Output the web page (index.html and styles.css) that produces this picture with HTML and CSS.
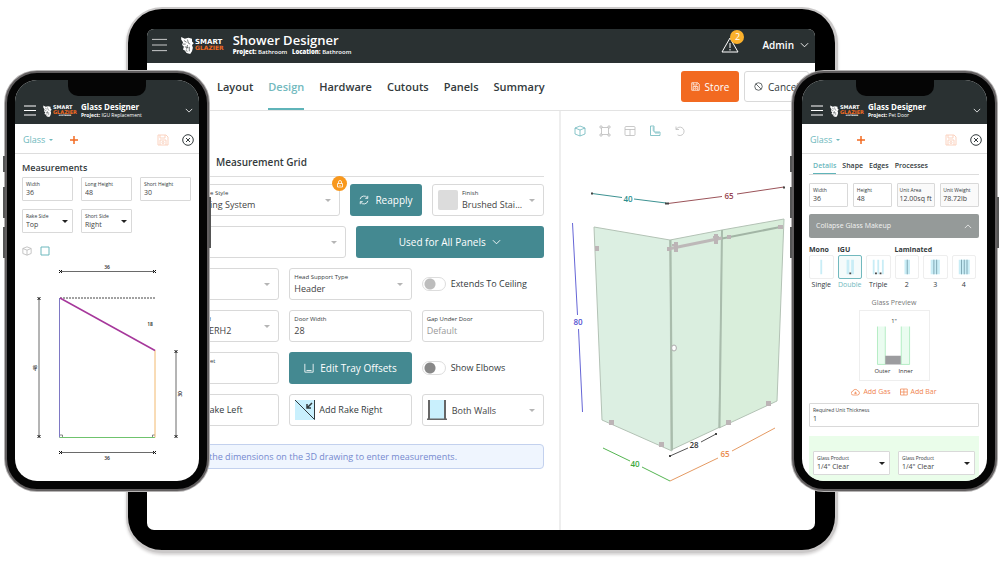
FILE: index.html
```html
<!DOCTYPE html>
<html lang="en">
<head>
<meta charset="utf-8">
<meta name="viewport" content="width=device-width, initial-scale=1">
<title>Smart Glazier</title>
<link rel="stylesheet" href="styles.css">
</head>
<body>
<svg class="sprite" aria-hidden="true">
  <symbol id="menu" viewBox="0 0 16 14"><path d="M0 1h16M0 7h16M0 13h16"/></symbol>
  <symbol id="chevron" viewBox="0 0 10 6"><path d="M1 1l4 4 4-4"/></symbol>
  <symbol id="tiger" viewBox="0 0 14 20">
    <path class="solid" d="M0 1l4 2 4-1 4 1 0 3 2 2-2 2 1 3-1 4-2 3-4-1-2-3-2-1 1-3-2-2 1-3-2-3z"/>
    <path class="stripe" d="M3 5l3 2M7 4l1 4 2 1M2 9l3 0M4 12l4 1M7 10l-1 5M9 12l0 5M5 16l2 1"/>
  </symbol>
  <symbol id="save" viewBox="0 0 12 12"><path d="M1 1h8l2 2v8H1zM3 1v3h5V1M3 11V6h6v5"/><circle cx="6" cy="8.5" r="1"/></symbol>
  <symbol id="close" viewBox="0 0 12 12"><circle cx="6" cy="6" r="5.3"/><path d="M4 4l4 4M8 4l-4 4"/></symbol>
  <symbol id="plus" viewBox="0 0 10 10"><path d="M5 1v8M1 5h8"/></symbol>
  <symbol id="cube" viewBox="0 0 12 12"><path d="M6 1l5 2v6l-5 2-5-2V3zM1 3l5 2 5-2M6 5v6"/></symbol>
  <symbol id="frame" viewBox="0 0 12 12"><path d="M3 2.500h6M3 9.500h6M2.500 3v6M9.500 3v6M1 1h2v2H1zM9 1h2v2H9zM1 9h2v2H1zM9 9h2v2H9z"/></symbol>
  <symbol id="grid" viewBox="0 0 12 12"><rect x="1" y="1.500" width="10" height="9" rx="1"/><path d="M1 4.500h10M6 4.500v6"/></symbol>
  <symbol id="ruler" viewBox="0 0 12 12"><path d="M1.500 1h3.500v6h6v3.500H1.500zM3.500 3H5M3.500 5H5M7 9V7M9 9V7"/></symbol>
  <symbol id="undo" viewBox="0 0 12 12"><path d="M2 1.500v3h3M2.200 4.300A4.200 4.200 0 1 1 3.500 9.800"/></symbol>
  <symbol id="ban" viewBox="0 0 12 12"><circle cx="6" cy="6" r="5"/><path d="M2.500 2.500l7 7"/></symbol>
  <symbol id="refresh" viewBox="0 0 12 12"><path d="M1.300 5A4.800 4.800 0 0 1 10 3.400M10.500 1v3h-3M10.700 7A4.800 4.800 0 0 1 2 8.600M1.500 11V8h3"/></symbol>
</svg>

<div class="stage">
  <main class="tablet">
    <div class="screen">
      <header class="bar">
        <button class="icon-btn" aria-label="Menu"><svg class="i-menu"><use href="#menu"/></svg></button>
        <div class="logo"><svg><use href="#tiger"/></svg><div><b>SMART</b><i>GLAZIER</i></div></div>
        <div class="heading"><h1>Shower Designer</h1><p><b>Project:</b> Bathroom &nbsp; <b>Location:</b> Bathroom</p></div>
        <button class="icon-btn alerts" aria-label="Alerts">
          <svg viewBox="0 0 18 16"><path d="M9 1l8 14H1zM9 6v5M9 12v1.500"/></svg><span class="count">2</span>
        </button>
        <button class="icon-btn user">Admin <svg class="i-chev"><use href="#chevron"/></svg></button>
      </header>
      <div class="tabs-row">
        <nav class="tabs">
          <a href="#layout">Layout</a><a href="#design" class="on">Design</a><a href="#hardware">Hardware</a><a href="#cutouts">Cutouts</a><a href="#panels">Panels</a><a href="#summary">Summary</a>
        </nav>
        <div class="actions">
          <button class="btn store"><svg><use href="#save"/></svg>Store</button>
          <button class="btn cancel"><svg><use href="#ban"/></svg>Cancel</button>
        </div>
      </div>
      <div class="work">
        <section class="form">
          <h2>Measurement Grid</h2>
          <div class="row r-style">
            <label class="field pick tucked"><span>e Style</span><select><option>ing System</option></select><em class="lock"><svg viewBox="0 0 8 8"><path d="M1.500 3.500h5v3.500h-5zM2.500 3.500V2a1.500 1.500 0 0 1 3 0v1.500M4 5v1"/></svg></em></label>
            <button class="btn teal"><svg><use href="#refresh"/></svg>Reapply</button>
            <label class="field pick swatched"><i class="swatch"></i><span>Finish</span><select><option>Brushed Stai...</option></select></label>
          </div>
          <div class="row r-half">
            <label class="field pick plain"><select aria-label="Panel"><option></option></select></label>
            <button class="btn teal">Used for All Panels <svg class="i-chev"><use href="#chevron"/></svg></button>
          </div>
          <div class="row">
            <label class="field pick plain"><select aria-label="Mount"><option></option></select></label>
            <label class="field pick"><span>Head Support Type</span><select><option>Header</option></select></label>
            <label class="toggle"><input type="checkbox" disabled>Extends To Ceiling</label>
          </div>
          <div class="row">
            <label class="field pick tucked deep"><span>ed</span><select><option>SERH2</option></select></label>
            <label class="field"><span>Door Width</span><input value="28"></label>
            <label class="field"><span>Gap Under Door</span><input placeholder="Default"></label>
          </div>
          <div class="row">
            <label class="field tucked"><span>et</span><input></label>
            <button class="btn teal"><svg viewBox="0 0 12 12"><path d="M1 1v10h10V1M3 9h6"/></svg>Edit Tray Offsets</button>
            <label class="toggle"><input type="checkbox">Show Elbows</label>
          </div>
          <div class="row">
            <button class="btn tile left">Rake Left</button>
            <button class="btn tile"><svg class="pic" viewBox="0 0 20 20"><path class="sky" d="M0 0h20v20H0z"/><path d="M0 0l19.500 19.500V0"/><path class="arrow" d="M17 3l-5 5M12 4v4h4"/></svg>Add Rake Right</button>
            <label class="field pick wall"><svg class="pic" viewBox="0 0 20 20"><path class="sky" d="M3 0h14v19H3z"/><path class="thick" d="M2 0v19M18 0v19M0 19.500h20"/></svg><select aria-label="Walls"><option>Both Walls</option></select></label>
          </div>
          <p class="note">the dimensions on the 3D drawing to enter measurements.</p>
        </section>
        <section class="view">
          <div class="tools">
            <button class="icon-btn on" aria-label="3D"><svg><use href="#cube"/></svg></button>
            <button class="icon-btn" aria-label="Frame"><svg><use href="#frame"/></svg></button>
            <button class="icon-btn" aria-label="Layout"><svg><use href="#grid"/></svg></button>
            <button class="icon-btn on" aria-label="Dimensions"><svg><use href="#ruler"/></svg></button>
            <button class="icon-btn" aria-label="Undo"><svg><use href="#undo"/></svg></button>
          </div>
          <svg class="shower" viewBox="560 150 254 350" role="img" aria-label="Shower enclosure">
            <g class="glass">
              <path class="g1" d="M593 227l76 13 2 211-70-31z"/>
              <path class="g2" d="M669 240l52-10-2 197-49 23z"/>
              <path class="g3" d="M721 230l62-11-7 182-58 27z"/>
            </g>
            <path class="post" d="M669.500 240l1.500 210M721 230l-2.500 198"/>
            <path class="rail" d="M667 249l54-11"/>
            <path class="rail2" d="M721 238.500l61-12"/>
            <path class="hw" d="M673 242h4v10h-4zM671 244h6v2h-6zM713 234h4v10h-4zM712 236h6v2h-6zM594 246h4v5h-4zM666 247h4v4h-4zM608 420h5v5h-5zM658 442h5v5h-5zM725 420h5v5h-5zM765 401h5v5h-5zM726 235h4v4h-4zM777 225h5v4h-5z"/>
            <ellipse class="knob" cx="673" cy="348" rx="2.400" ry="3"/>
            <g class="dims">
              <path stroke="#3d9292" d="M591 193.500l30 4M633 199l32 4"/><path stroke="#9b5359" d="M667 203.500l54-7M736 194l47-7"/>
              <path stroke="#6666d6" d="M571.500 223l5 92M577.500 329l4 83"/><path stroke="#55b552" d="M602 448l27 13M641 467l28 14"/>
              <path stroke="#555" d="M669 456l18-8M700 442l15-8"/><path stroke="#e59a63" d="M669 481l48-23M731 451l43-23"/>
            </g>
            <path class="ends" d="M590 192.500h2v2h-2zM664 202.500h4v2h-4zM782 186.500h2v2h-2zM668 455h2v2h-2zM714 433h2v2h-2z"/>
            <g class="nums">
              <text x="627" y="202" fill="#2b8d8d">40</text><text x="728" y="199" fill="#974550">65</text>
              <text x="577" y="325" fill="#5050d0">80</text><text x="634" y="467" fill="#3ba83a">40</text>
              <text x="693" y="448" fill="#333">28</text><text x="724" y="457" fill="#ea8a4c">65</text>
            </g>
          </svg>
        </section>
      </div>
    </div>
  </main>

  <aside class="phone phone-a">
    <div class="screen">
      <header class="bar">
        <button class="icon-btn" aria-label="Menu"><svg class="i-menu"><use href="#menu"/></svg></button>
        <div class="logo"><svg><use href="#tiger"/></svg><div><b>SMART</b><i>GLAZIER</i><small>SOFTWARE</small></div></div>
        <div class="heading"><h1>Glass Designer</h1><p><b>Project:</b> IGU Replacement</p></div>
        <button class="icon-btn" aria-label="Expand"><svg class="i-chev"><use href="#chevron"/></svg></button>
      </header>
      <div class="toolbar">
        <button class="icon-btn glass-menu">Glass</button>
        <button class="icon-btn add" aria-label="Add"><svg><use href="#plus"/></svg></button>
        <button class="icon-btn save" aria-label="Save"><svg><use href="#save"/></svg></button>
        <button class="icon-btn close" aria-label="Close"><svg><use href="#close"/></svg></button>
      </div>
      <div class="body">
        <h2>Measurements</h2>
        <div class="thirds">
          <label class="field"><span>Width</span><input value="36"></label>
          <label class="field"><span>Long Height</span><input value="48"></label>
          <label class="field"><span>Short Height</span><input value="30"></label>
          <label class="field pick"><span>Rake Side</span><select><option>Top</option></select></label>
          <label class="field pick"><span>Short Side</span><select><option>Right</option></select></label>
        </div>
        <div class="modes">
          <button class="icon-btn" aria-label="3D"><svg><use href="#cube"/></svg></button>
          <button class="icon-btn on" aria-label="2D"><svg viewBox="0 0 10 10"><path d="M1 1h8v8H1z"/></svg></button>
        </div>
      </div>
      <svg class="sketch" viewBox="15 260 184 210" role="img" aria-label="Raked panel">
        <g class="measure">
          <path d="M60 271.500h95M60 452.500h95M39 298v139M176 351v86"/>
          <path class="tick" d="M59 270l3 3M59 273l3-3M153 270l3 3M153 273l3-3M59 451l3 3M59 454l3-3M153 451l3 3M153 454l3-3M37.500 297l3 3M37.500 300l3-3M37.500 435l3 3M37.500 438l3-3M174.500 350l3 3M174.500 353l3-3M174.500 435l3 3M174.500 438l3-3"/>
        </g>
        <path class="dash" d="M60 298h95"/>
        <path class="corner" d="M60 435h2.500v2.500M155 435h-2.500v2.500"/>
        <path stroke="#7e78c4" d="M59.500 298v139.500"/><path stroke="#6fc36d" d="M59.500 437.500h95.500"/>
        <path stroke="#f2b96f" d="M155 350v87.500"/><path stroke="#a6379b" stroke-width="1.500" d="M60 298l95 52.500"/>
        <text x="107" y="269">36</text><text x="107" y="460">36</text><text x="150" y="326">18</text>
        <text transform="translate(37 368) rotate(-90)">48</text><text transform="translate(182 394) rotate(-90)">30</text>
      </svg>
    </div>
  </aside>

  <aside class="phone phone-b">
    <div class="screen">
      <header class="bar">
        <button class="icon-btn" aria-label="Menu"><svg class="i-menu"><use href="#menu"/></svg></button>
        <div class="logo"><svg><use href="#tiger"/></svg><div><b>SMART</b><i>GLAZIER</i><small>SOFTWARE</small></div></div>
        <div class="heading"><h1>Glass Designer</h1><p><b>Project:</b> Pet Door</p></div>
        <button class="icon-btn" aria-label="Expand"><svg class="i-chev"><use href="#chevron"/></svg></button>
      </header>
      <div class="toolbar">
        <button class="icon-btn glass-menu">Glass</button>
        <button class="icon-btn add" aria-label="Add"><svg><use href="#plus"/></svg></button>
        <button class="icon-btn save" aria-label="Save"><svg><use href="#save"/></svg></button>
        <button class="icon-btn close" aria-label="Close"><svg><use href="#close"/></svg></button>
      </div>
      <div class="body">
        <nav class="subtabs"><a href="#details" class="on">Details</a><a href="#shape">Shape</a><a href="#edges">Edges</a><a href="#processes">Processes</a></nav>
        <div class="quarters">
          <label class="field"><span>Width</span><input value="36"></label>
          <label class="field"><span>Height</span><input value="48"></label>
          <label class="field locked"><span>Unit Area</span><input value="12.00sq ft" readonly></label>
          <label class="field locked"><span>Unit Weight</span><input value="78.72lb" readonly></label>
        </div>
        <button class="collapse">Collapse Glass Makeup<svg class="i-chev up"><use href="#chevron"/></svg></button>
        <div class="makeup">
          <h3>Mono</h3><h3 class="two">IGU</h3><h3 class="three">Laminated</h3>
          <button class="kind"><svg viewBox="0 0 24 24"><path class="pane" d="M11 4h2v16h-2z"/></svg><span>Single</span></button>
          <button class="kind on"><svg viewBox="0 0 24 24"><path class="pane" d="M8 4h3v16H8zM13 4h3v16h-3z"/><path class="seal" d="M11 18h2v2h-2z"/></svg><span>Double</span></button>
          <button class="kind"><svg viewBox="0 0 24 24"><path class="pane" d="M6 4h2v16H6zM11 4h2v16h-2zM16 4h2v16h-2z"/><path class="seal" d="M8.500 18h2v2h-2zM13.500 18h2v2h-2z"/></svg><span>Triple</span></button>
          <button class="kind"><svg viewBox="0 0 24 24"><path class="pane" d="M9 4h6v16H9z"/><path class="film" d="M12 4v16"/></svg><span>2</span></button>
          <button class="kind"><svg viewBox="0 0 24 24"><path class="pane" d="M7 4h10v16H7z"/><path class="film" d="M10.500 4v16M13.500 4v16"/></svg><span>3</span></button>
          <button class="kind"><svg viewBox="0 0 24 24"><path class="pane" d="M6 4h12v16H6z"/><path class="film" d="M9 4v16M12 4v16M15 4v16"/></svg><span>4</span></button>
        </div>
        <p class="caption">Glass Preview</p>
        <figure class="preview">
          <svg viewBox="0 0 71 71" role="img" aria-label="Double glazed unit">
            <path class="lite" d="M18 16h8v39h-8zM42 16h9v39h-9z"/><path class="edge" d="M18 16v39M26 16v39M42.500 16v39M51 16v39M18 55h8M42 55h9"/>
            <path class="spacer" d="M26 46h16v9H26z"/>
            <text x="35" y="12">1"</text><text x="23" y="64">Outer</text><text x="47" y="64">Inner</text>
          </svg>
        </figure>
        <div class="adds">
          <button class="icon-btn"><svg viewBox="0 0 12 10"><path d="M3 9a2.500 2.500 0 0 1-.5-5A3.500 3.500 0 0 1 9 3.500 2.800 2.800 0 0 1 9 9zM4 6.500h4M6 4.500v3"/></svg>Add Gas</button>
          <button class="icon-btn"><svg viewBox="0 0 12 10"><path d="M2 1h9v8H2zM2 5h9M6.500 1v8"/></svg>Add Bar</button>
        </div>
        <label class="field"><span>Required Unit Thickness</span><input value="1"></label>
        <div class="products">
          <label class="field pick"><span>Glass Product</span><select><option>1/4" Clear</option></select></label>
          <label class="field pick"><span>Glass Product</span><select><option>1/4" Clear</option></select></label>
        </div>
      </div>
    </div>
  </aside>
</div>
</body>
</html>
```
FILE: styles.css
```css
* { box-sizing: border-box; }
body { margin: 0; background: #fff; color: #333a3c; font: 9px/12px "Open Sans", "Noto Sans", sans-serif; }
h1, h2, h3, p, figure { margin: 0; }
button, input, select { font: inherit; color: inherit; margin: 0; padding: 0; border: 0; background: none; }
a { color: inherit; text-decoration: none; }
svg { display: block; flex: none; fill: none; stroke: currentColor; }
svg text { stroke: none; text-anchor: middle; }
.sprite { position: absolute; width: 0; height: 0; }
.icon-btn { display: flex; align-items: center; gap: 4px; }
.solid { fill: #fff; stroke: none; }
.stripe { stroke: #2a3132; stroke-width: .7; }

.stage { display: grid; grid-template-columns: 121px 83px minmax(480px, 1fr) 46px 159px; padding: 7px 3px 10px 5px; }
.tablet, .phone { grid-row: 1; }
.tablet { grid-column: 2 / 5; display: flex; background: #000; border: solid #cbc9c9; border-width: 2px 3px 3px 2px; border-radius: 36px; padding: 20px 20px 20px 19px; min-height: 546px; box-shadow: 0 2px 3px #d5d3d3; }
.tablet .screen { flex: 1; min-width: 0; display: flex; flex-direction: column; background: #fff; border-radius: 7px; overflow: hidden; }
.bar { display: flex; align-items: center; background: #2a3132; color: #fff; }
.tablet .bar { height: 34px; padding: 0 6px 3px 5px; }
.i-menu { width: 14px; height: 14px; }
.i-chev { width: 9px; height: 6px; }
.logo { display: flex; align-items: center; gap: 1px; font-family: "DejaVu Sans", sans-serif; font-weight: bold; }
.logo b, .logo i, .logo small { display: block; font-style: normal; }
.logo i { color: #f26a21; }
.tablet .logo { margin: 0 9px 0 14px; font-size: 7px; line-height: 6px; }
.tablet .logo svg { width: 13px; height: 18px; }
.tablet .logo i { font-size: 6px; }
.heading { flex: 1; }
.tablet h1 { font-size: 13px; line-height: 15px; font-weight: 600; }
.heading p { font-size: 6px; line-height: 8px; }
.tablet .heading p { font-weight: 600; }
.tablet .i-menu { width: 15px; opacity: .8; }
.alerts { position: relative; margin-right: 23px; }
.alerts svg { width: 18px; height: 16px; }
.count { position: absolute; left: 9px; top: -7px; width: 14px; height: 14px; border-radius: 50%; background: #fbb12c; font-size: 9px; line-height: 14px; text-align: center; }
.user { font-size: 10px; font-weight: 600; gap: 6px; }

.tabs-row { display: flex; justify-content: space-between; height: 48px; padding: 0 6px 0 70px; border-bottom: 1px solid #e3e3e3; }
.tabs { display: flex; gap: 15px; font-size: 11px; font-weight: 600; }
.tabs a { display: flex; align-items: center; padding-top: 2px; border-bottom: 2px solid transparent; }
.tabs .on { color: #72b9be; border-color: #5fb4b9; }
.actions { display: flex; gap: 5px; padding: 8px 0; }
.btn { display: flex; align-items: center; justify-content: center; gap: 6px; font-size: 10px; border-radius: 3px; min-height: 31px; }
.btn svg { width: 9px; height: 9px; }
.store { width: 58px; background: #f26a21; color: #fff; font-weight: 500; gap: 5px; }
.cancel { width: 65px; border: 1px solid #d9d9d9; font-weight: 500; gap: 5px; }
.teal { background: #448991; color: #fff; font-weight: 500; min-height: 32px; }
.teal svg { width: 10px; height: 10px; }
.teal .i-chev { width: 9px; height: 6px; }

.work { flex: 1; display: grid; grid-template-columns: minmax(0, 414fr) minmax(0, 254fr); }
.form { display: flex; flex-direction: column; gap: 10px; padding: 44px 15px 0 10px; border-right: 2px solid #eee; }
.form h2 { padding: 0 0 7px 59px; font-size: 10px; line-height: 14px; font-weight: 600; border-bottom: 1px solid #ddd; margin-bottom: -2px; }
.row { display: grid; grid-template-columns: repeat(3, minmax(0, 1fr)); gap: 10px; }
.r-style { grid-template-columns: minmax(0, 183fr) minmax(0, 72fr) minmax(0, 112fr); }
.r-half { grid-template-columns: minmax(0, 1fr) minmax(0, 1fr); }

.field { position: relative; display: flex; flex-direction: column; justify-content: center; border: 1px solid #d9d9d9; border-radius: 3px; background: #fff; padding: 0 4px; min-width: 0; }
.field span { font-size: 6px; line-height: 9px; white-space: nowrap; }
.field input, .field select { appearance: none; outline: 0; width: 100%; height: 13px; line-height: 13px; min-width: 0; color: #444; }
.field input::placeholder { color: #999; opacity: 1; }
.tablet .field { min-height: 32px; }
.tablet .field select, .tablet .field input { font-size: 9px; }
.pick::after { content: ""; position: absolute; right: 8px; top: 50%; margin-top: -1px; border: solid transparent; border-width: 3px 3px 0; border-top-color: #b5b5b5; }
.tablet .tucked { padding-left: 52px; }
.tablet .deep { padding-left: 46px; }
.swatch { position: absolute; left: 5px; top: 5px; width: 20px; height: 20px; border-radius: 2px; background: #dcdcdc; }
.tablet .swatched { padding-left: 29px; }
.lock { position: absolute; right: -8px; top: -9px; width: 15px; height: 15px; border-radius: 50%; background: #f8981d; color: #fff; display: grid; place-items: center; }
.lock svg { width: 8px; height: 8px; stroke-width: .8; }
.toggle { display: flex; align-items: center; gap: 5px; font-size: 9px; font-weight: 500; white-space: nowrap; }
.toggle input { appearance: none; width: 24px; height: 14px; border: 1px solid #ddd; border-radius: 7px; background: radial-gradient(circle at 7px 6px, #888 5px, transparent 6px); }
.toggle input:disabled { background: radial-gradient(circle at 7px 6px, #bdbdbd 5px, transparent 6px); }
.tile { min-height: 32px; border: 1px solid #d9d9d9; justify-content: flex-start; gap: 4px; padding: 0 5px; font-size: 9px; font-weight: 500; }
.left { padding-left: 46px; }
.btn .pic, .pic { width: 20px; height: 20px; }
.sky { fill: #c9f0fd; stroke: none; }
.arrow { stroke-width: 1.500; }
.thick { stroke: #666; stroke-width: 2; }
.tablet .wall { flex-direction: row; align-items: center; justify-content: flex-start; gap: 5px; }
.wall select { font-weight: 500; }
.note { margin-top: 8px; padding: 5px 5px 5px 51px; border: 1px solid #c3d1ee; border-radius: 4px; background: #eff5fe; color: #7589cf; font-size: 9px; line-height: 13px; }

.form h2 + .row { margin-top: -1px; }
.tools { display: flex; gap: 13px; padding: 14px 13px 13px; color: #bbb; }
.tools svg { width: 12px; height: 12px; stroke-width: .8; }
.tools .on, .modes .on { color: #6db8bd; }
.shower { width: 100%; height: auto; }
.glass path { stroke: #b3c2b5; }
.g1 { fill: #dcefe2; }
.g2 { fill: #daeedf; }
.g3 { fill: #d9eedb; }
.post { stroke: #a9bcac; stroke-width: 2; }
.rail { stroke: #bdb8b8; stroke-width: 3; }
.rail2 { stroke: #a2b5a5; stroke-width: 2; }
.hw { fill: #bcb4b6; stroke: none; }
.knob { fill: #fff; stroke: #aaa; }
.ends { fill: #444; stroke: none; }
.nums { font-size: 8px; font-weight: 600; }

.phone { position: relative; margin-top: 64px; align-self: start; background: #050505; border: 2px solid #625f60; border-radius: 32px; padding: 7px 8px 8px; box-shadow: 0 0 0 1px #b5b3b3; }
.phone-a { grid-column: 1 / 3; }
.phone-b { grid-column: 4 / 6; }
.phone::before { content: ""; position: absolute; left: -4px; top: 83px; width: 2px; height: 102px; background: linear-gradient(#555 16px, transparent 16px 31px, #555 31px 62px, transparent 62px 71px, #555 71px); }
.phone::after { content: ""; position: absolute; right: -4px; top: 124px; width: 2px; height: 51px; background: #555; }
.phone .screen { position: relative; display: flex; flex-direction: column; min-height: 401px; background: #fff; border-radius: 22px; overflow: hidden; font-size: 7px; }
.phone .screen::before { content: ""; position: absolute; left: 50%; top: 0; width: 78px; height: 16px; margin-left: -39px; border-radius: 0 0 10px 10px; background: #050505; }
.phone .bar { height: 44px; padding: 17px 6px 0 9px; }
.phone .i-menu { width: 12px; height: 11px; stroke-width: 1.500; }
.phone .i-chev { width: 8px; height: 5px; }
.phone .logo { margin: 0 4px 0 7px; font-size: 5px; line-height: 5px; }
.phone .logo svg { width: 9px; height: 12px; }
.phone .logo i { font-size: 5px; line-height: 4px; }
.phone .logo small { font-size: 2px; line-height: 3px; text-align: center; }
.phone h1 { font-size: 8px; line-height: 9px; font-weight: 700; white-space: nowrap; }
.phone .heading p { font-size: 5px; line-height: 8px; }
.toolbar { display: flex; align-items: center; height: 30px; padding: 2px 5px 0 8px; border-bottom: 1px solid #ddd; }
.glass-menu { color: #6db8bd; font-size: 9px; font-weight: 500; }
.glass-menu::after { content: ""; border: solid transparent; border-width: 2px 2px 0; border-top-color: currentColor; }
.add { color: #f26a21; margin: 0 auto 0 16px; }
.add svg { width: 10px; height: 10px; stroke-width: 1.500; }
.save { color: #fbd3c0; margin-right: 13px; }
.save svg, .close svg { width: 12px; height: 12px; }
.body { padding: 0 8px 0 7px; }
.phone .body h2 { padding: 7px 0 3px; font-size: 9px; line-height: 13px; font-weight: 600; }
.thirds { display: grid; grid-template-columns: repeat(3, minmax(0, 1fr)); gap: 8px; }
.phone .field { min-height: 24px; padding: 0 3px; border-radius: 1px; }
.phone .field span { font-size: 5px; line-height: 8px; }
.phone .field input, .phone .field select { height: 10px; line-height: 10px; }
.phone .pick::after { right: 4px; border-top-color: #222; }
.modes { display: flex; gap: 8px; padding: 13px 0 0; color: #bbb; }
.modes svg { width: 10px; height: 10px; }
.sketch { width: 100%; height: auto; margin-top: 4px; }
.measure path { stroke: #444; stroke-width: .8; }
.measure .tick { stroke: #111; stroke-width: 1; }
.dash { stroke: #444; stroke-dasharray: 2 1; }
.corner { stroke: #555; stroke-width: .7; }
.sketch text { font-size: 5px; font-weight: 600; fill: #222; }

.subtabs { display: flex; gap: 6px; padding: 0 4px; font-size: 7px; font-weight: 600; border-bottom: 1px solid #ddd; }
.subtabs a { padding: 6px 0 1px; border-bottom: 1px solid transparent; }
.subtabs .on { color: #6db8bd; border-color: #5fb4b9; }
.quarters { display: grid; grid-template-columns: repeat(4, minmax(0, 1fr)); gap: 5px; padding: 8px 0 7px; }
.locked { background: #fafafa; }
.quarters .locked { padding: 0 2px; }
.collapse { display: flex; align-items: center; justify-content: space-between; width: 100%; height: 24px; padding: 0 7px; border-radius: 2px; background: #959a99; color: #f2f2f2; }
.up { transform: rotate(180deg); }
.makeup { display: grid; grid-template-columns: repeat(6, minmax(0, 1fr)); column-gap: 4px; padding: 7px 3px 0 0; }
.makeup h3 { font-size: 7px; line-height: 10px; font-weight: 700; }
.makeup .three { grid-column: 4 / 7; }
.makeup .two { grid-column: 2 / 4; }
.kind { display: flex; flex-direction: column; align-items: center; }
.kind svg { width: 100%; height: 24px; border: 1px solid #eee; border-radius: 2px; }
.kind.on { color: #72b9be; }
.kind.on svg { border-color: #72b9be; background: #f4fbfb; }
.pane { fill: #c9edf6; stroke: none; }
.seal { fill: #444; stroke: none; }
.film { stroke: #7ba3b0; stroke-width: 1; }
.caption { padding-top: 6px; text-align: center; color: #777; }
.preview { width: 71px; margin: 1px auto 0; border: 1px solid #eee; }
.preview text { font-size: 6px; font-weight: 500; fill: #333; }
.lite { fill: #eafcf0; stroke: none; }
.edge { stroke: #b5ecc4; }
.spacer { fill: #9c9c9f; stroke: none; }
.adds { display: flex; justify-content: center; gap: 8px; padding: 5px 0; color: #f08550; font-weight: 500; }
.adds .icon-btn { gap: 3px; }
.adds svg { width: 9px; height: 8px; }
.products { display: grid; grid-template-columns: 1fr 1fr; gap: 8px; margin-top: 9px; padding: 15px 4px 6px; background: #eafdea; }
```
